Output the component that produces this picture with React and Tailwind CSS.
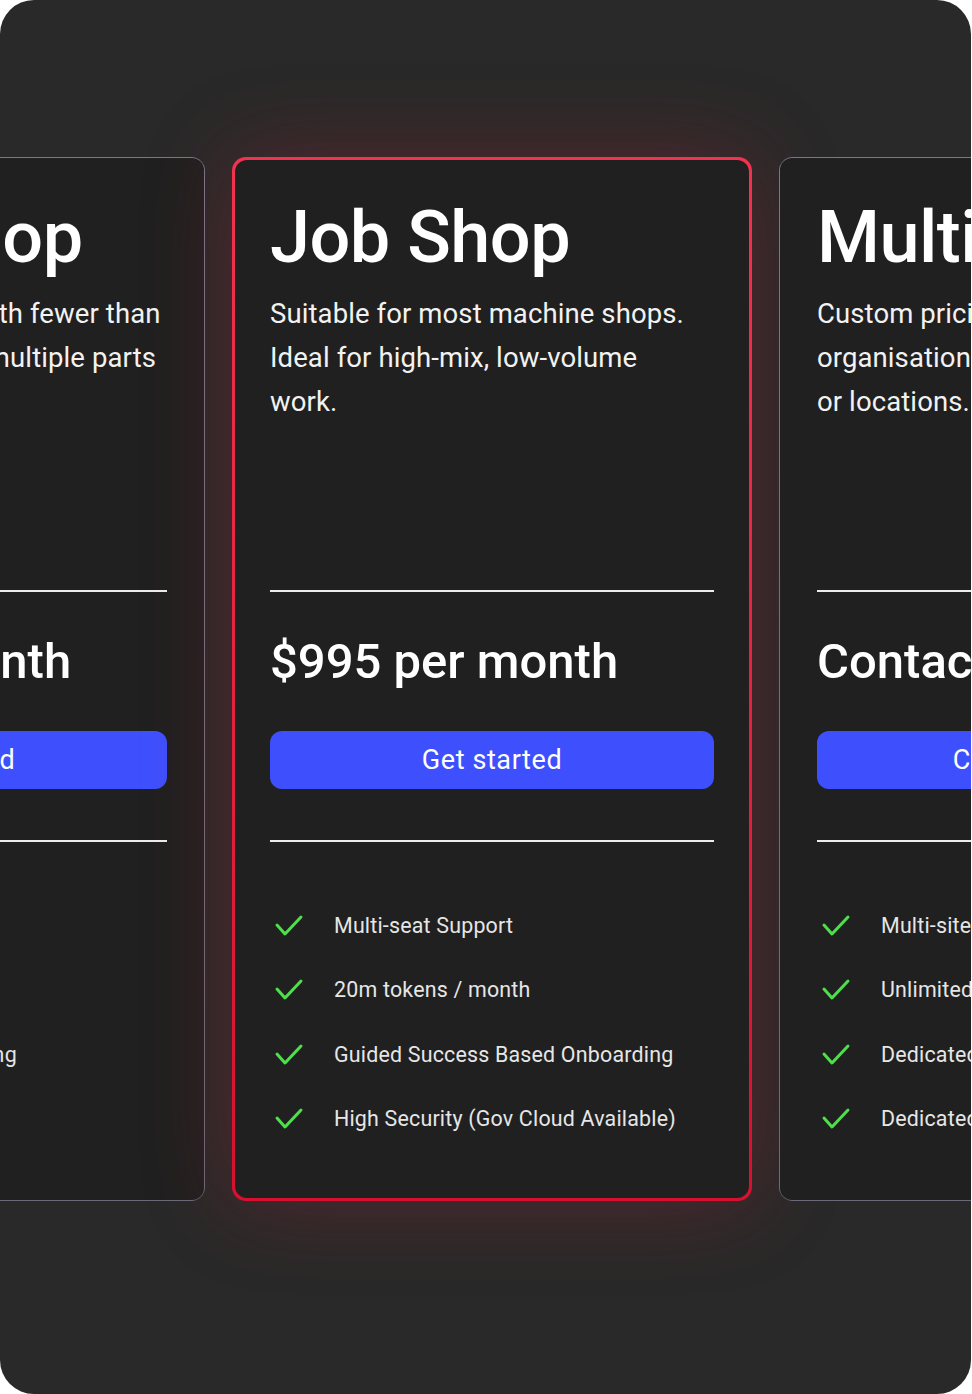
import React from 'react';

const plans = [
  {
    name: 'Small Shop',
    lines: ['For small job shops with fewer than', '5 people, not making multiple parts'],
    price: '$495 per month',
    cta: 'Get started',
    features: ['Single-seat Support', '5m tokens / month', 'Self-Guided Onboarding', 'Standard Security'],
  },
  {
    name: 'Job Shop',
    lines: ['Suitable for most machine shops.', 'Ideal for high-mix, low-volume', 'work.'],
    price: '$995 per month',
    cta: 'Get started',
    features: ['Multi-seat Support', '20m tokens / month', 'Guided Success Based Onboarding', 'High Security (Gov Cloud Available)'],
    featured: true,
  },
  {
    name: 'Multi-site',
    lines: ['Custom pricing for large', 'organisations with multiple sites', 'or locations.'],
    price: 'Contact us',
    cta: 'Contact sales',
    features: ['Multi-site Support', 'Unlimited tokens', 'Dedicated Success Manager', 'Dedicated Cloud Instance'],
  },
];

const Check = () => (
  <svg width="30" height="24" viewBox="0 0 30 24" fill="none" className="shrink-0">
    <polyline points="3,11 11,20 27,3" stroke="#4ee04a" strokeWidth="3" strokeLinecap="round" strokeLinejoin="round" />
  </svg>
);

const PlanCard = ({ plan }) => (
  <div
    className={
      plan.featured
        ? 'shrink-0 w-[520px] h-[1044px] rounded-[14px] p-[3px] bg-gradient-to-b from-[#f2334f] to-[#d6102e] shadow-[0_0_90px_rgba(220,30,55,0.25)]'
        : 'shrink-0 w-[520px] h-[1044px] rounded-[14px] p-px bg-gradient-to-b from-[#7a778d] to-[#6c6a78]'
    }
  >
    <div
      className={
        plan.featured
          ? 'h-full rounded-[12px] bg-[#202020] px-[35px] pt-[42px] flex flex-col'
          : 'h-full rounded-[12px] bg-[#202020] px-[37px] pt-[44px] flex flex-col'
      }
    >
      <div className="h-[388px] flex flex-col">
        <h2 className="text-[72px] leading-none font-medium text-white whitespace-nowrap tracking-[-0.5px]">{plan.name}</h2>
        <p className="mt-[18px] text-[27.5px] leading-[44px] text-[#f2f2f2] whitespace-nowrap tracking-[0.1px]">
          {plan.lines.map((l, i) => (
            <span key={i} className="block">{l}</span>
          ))}
        </p>
      </div>
      <div className="h-[2px] bg-[#ececec]" />
      <div className="mt-[45px] text-[49px] leading-none font-medium text-white whitespace-nowrap">{plan.price}</div>
      <button className="mt-[45px] h-[58px] w-full rounded-[12px] bg-[#3e50fe] text-[27px] text-white tracking-[0.6px] whitespace-nowrap">
        {plan.cta}
      </button>
      <div className="mt-[51px] h-[2px] bg-[#ececec]" />
      <ul className="mt-[52px] flex flex-col">
        {plan.features.map((f) => (
          <li key={f} className="h-[64.3px] flex items-center gap-[30px] pl-[4px]">
            <Check />
            <span className="text-[21.4px] text-[#e6e6e6] whitespace-nowrap tracking-[0.2px]">{f}</span>
          </li>
        ))}
      </ul>
    </div>
  </div>
);

export default function App() {
  return (
    <div className="bg-white w-[972px] h-[1394px]" style={{ fontFamily: 'Roboto, "Noto Sans", sans-serif' }}>
      <div className="w-[971px] h-[1394px] rounded-[34px] bg-[#292929] overflow-hidden pt-[157px]">
        <div className="flex gap-[27px] -ml-[315px]">
          {plans.map((p) => (
            <PlanCard key={p.name} plan={p} />
          ))}
        </div>
      </div>
    </div>
  );
}
